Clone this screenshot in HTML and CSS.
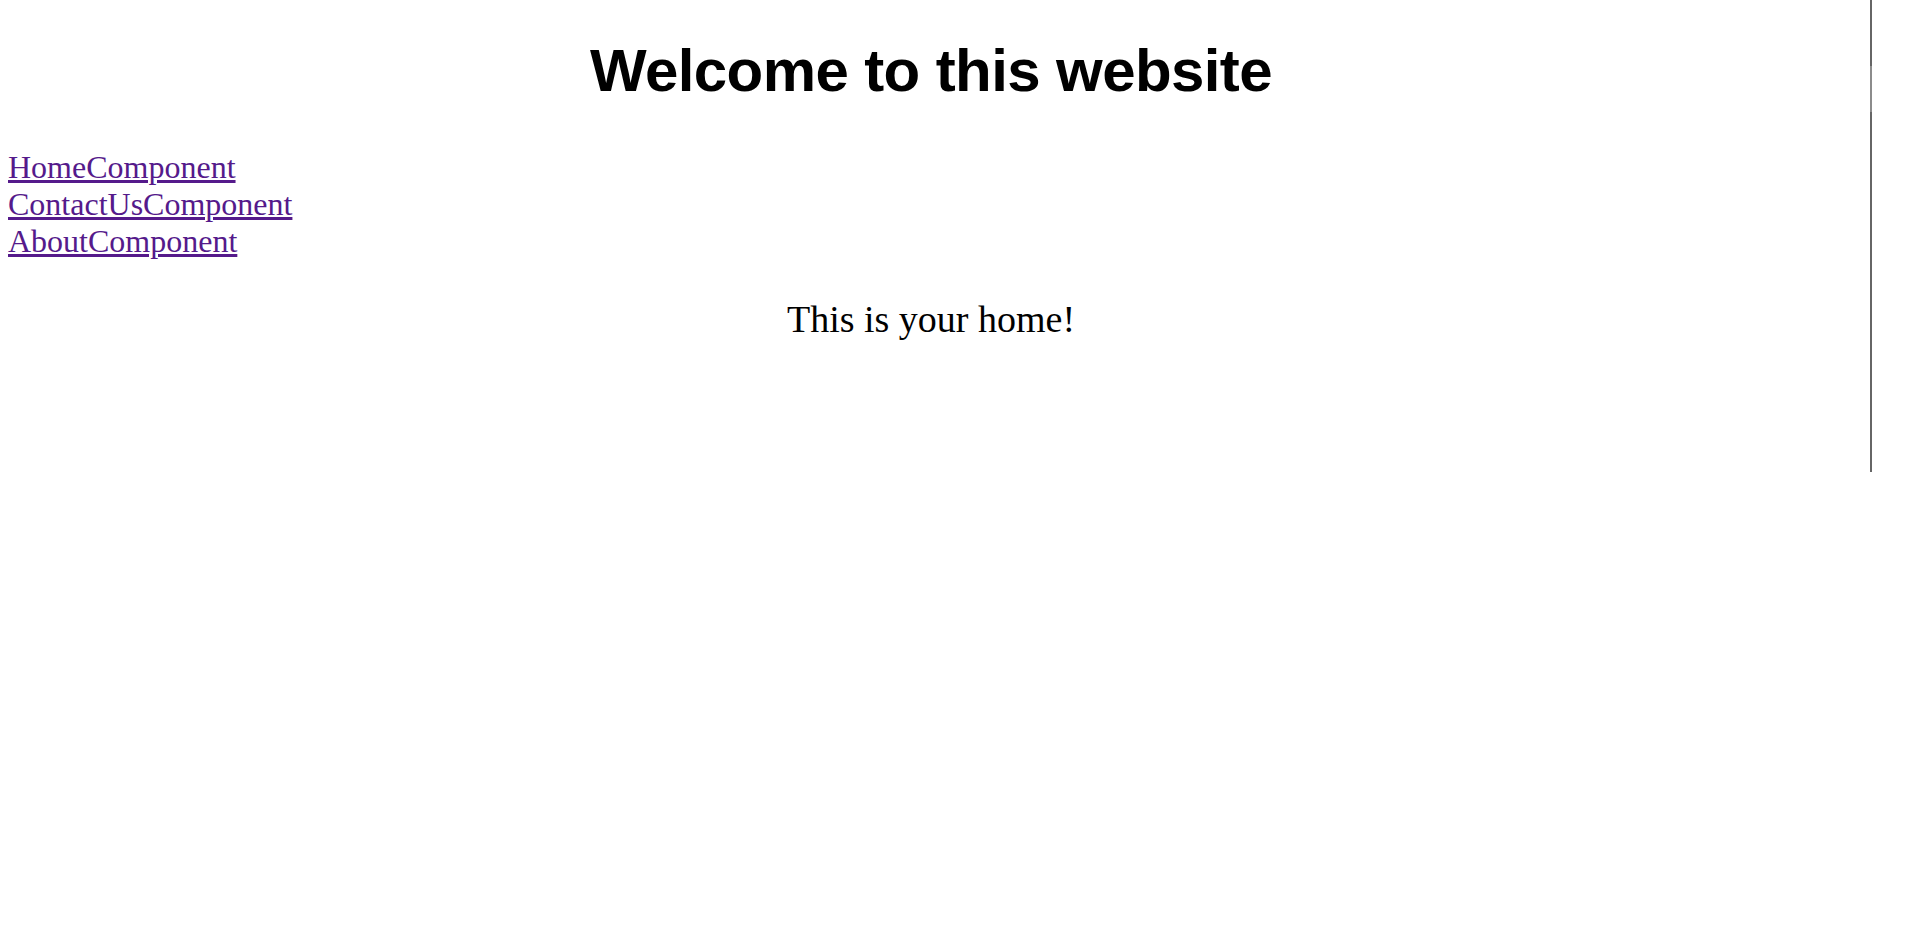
FILE: index.html
```html
<!DOCTYPE html>
<html>
<head>
<meta charset="utf-8">
<title>Welcome</title>
<link rel="stylesheet" href="styles.css">
</head>
<body>
<div class="frame">
  <main class="page">
    <h1 class="title">Welcome to this website</h1>
    <nav class="nav">
      <a href="#home">HomeComponent</a>
      <a href="#contact">ContactUsComponent</a>
      <a href="#about">AboutComponent</a>
    </nav>
    <p class="message">This is your home!</p>
  </main>
  <div class="rail"></div>
</div>
</body>
</html>
```
FILE: styles.css
```css
html, body {
  margin: 0;
  padding: 0;
  background: #fff;
}
.frame {
  display: flex;
  width: 1872px;
  height: 472px;
}
.page {
  flex: 1;
  padding: 0 16px 0 8px;
  font-family: "Liberation Serif", serif;
}
.rail {
  width: 2px;
  background: linear-gradient(to bottom, #666 0, #666 66px, #8c8c8c 66px, #8c8c8c 112px, #666 112px, #666 100%);
}
.title {
  margin: 0;
  padding-top: 34px;
  text-align: center;
  font-family: "Liberation Sans", Arial, sans-serif;
  font-weight: bold;
  font-size: 60px;
  line-height: 74px;
  letter-spacing: -0.6px;
}
.nav {
  margin-top: 41px;
  display: flex;
  flex-direction: column;
  font-size: 32px;
  line-height: 37px;
}
.nav a {
  color: #551a8b;
  align-self: flex-start;
}
.message {
  margin: 37px 0 0;
  text-align: center;
  font-size: 38px;
}
```
